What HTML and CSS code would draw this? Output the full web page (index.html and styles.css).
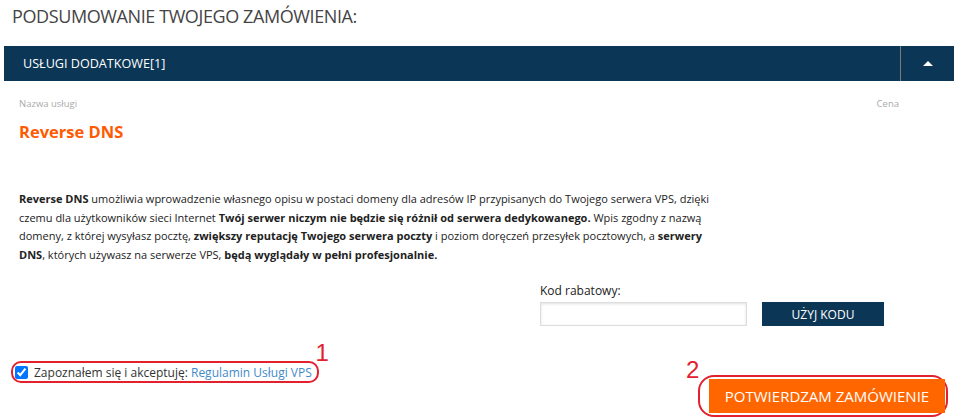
FILE: index.html
```html
<!DOCTYPE html>
<html>
<head>
    <meta charset="utf-8">
    <title>Podsumowanie zamówienia</title>
    <link rel="stylesheet" href="styles.css">
</head>
<body>
    <div class="summary">
        <h1 class="summary-title">PODSUMOWANIE TWOJEGO ZAMÓWIENIA:</h1>

        <div class="section-bar">
            <div class="bar-title">USŁUGI DODATKOWE[1]</div>
            <div class="bar-toggle"><span class="arrow-up"></span></div>
        </div>

        <div class="service-head">
            <span>Nazwa usługi</span>
            <span>Cena</span>
        </div>

        <div class="service">
            <h2 class="service-name">Reverse DNS</h2>
            <p class="service-desc"><b>Reverse DNS</b> umożliwia wprowadzenie własnego opisu w postaci domeny dla adresów IP przypisanych do Twojego serwera VPS, dzięki czemu dla użytkowników sieci Internet <b>Twój serwer niczym nie będzie się różnił od serwera dedykowanego.</b> Wpis zgodny z nazwą domeny, z której wysyłasz pocztę, <b>zwiększy reputację Twojego serwera poczty</b> i poziom doręczeń przesyłek pocztowych, a <b>serwery DNS</b>, których używasz na serwerze VPS, <b>będą wyglądały w pełni profesjonalnie.</b></p>
        </div>

        <div class="discount">
            <div class="discount-box">
                <label class="discount-label" for="code">Kod rabatowy:</label>
                <div class="discount-row">
                    <input class="discount-input" id="code" type="text">
                    <button class="btn-dark">UŻYJ KODU</button>
                </div>
            </div>
        </div>

        <div class="order-footer">
            <label class="terms marked">
                <input type="checkbox" checked>
                <span>Zapoznałem się i akceptuję: <a href="#">Regulamin Usługi VPS</a></span>
                <span class="mark-num mark-1">1</span>
            </label>

            <div class="confirm marked">
                <span class="mark-num mark-2">2</span>
                <button class="btn-orange">POTWIERDZAM ZAMÓWIENIE</button>
            </div>
        </div>
    </div>
</body>
</html>
```

FILE: styles.css
```css
* { box-sizing: border-box; }

body {
    margin: 0;
    background: #fff;
    color: #222;
    font-family: "Open Sans", Arial, sans-serif;
}

.summary {
    padding: 0 0 0 4px;
}

.summary-title {
    margin: 0;
    padding: 4px 8px 0;
    font-size: 18px;
    letter-spacing: -0.4px;
    font-weight: normal;
    color: #444;
    height: 46px;
}

.section-bar {
    display: flex;
    height: 35px;
    background: #0b3655;
    color: white;
}

.bar-title {
    flex: 1;
    padding-left: 19px;
    line-height: 35px;
    font-size: 12.6px;
}

.bar-toggle {
    width: 54px;
    border-left: 1px solid #7a7a7a;
    display: flex;
    align-items: center;
    justify-content: center;
}

.arrow-up {
    width: 0;
    height: 0;
    border-left: 5px solid transparent;
    border-right: 5px solid transparent;
    border-bottom: 5px solid white;
}

.service-head {
    display: flex;
    justify-content: space-between;
    padding: 16px 55px 0 15px;
    font-size: 9.5px;
    color: #aaa;
}

.service {
    padding: 0 15px;
}

.service-name {
    margin: 10px 0 0;
    font-size: 16.5px;
    color: #ff5a00;
}

.service-desc {
    margin: 47px 0 0;
    width: 700px;
    font-size: 11px;
    line-height: 18.5px;
    color: #222;
}

.discount {
    display: flex;
    justify-content: flex-end;
    padding-right: 70px;
    margin-top: 18px;
}

.discount-box {
    width: 344px;
}

.discount-label {
    display: block;
    font-size: 12px;
    margin-bottom: 3px;
}

.discount-row {
    display: flex;
    gap: 15px;
}

.discount-input {
    width: 207px;
    height: 24px;
    border: 1px solid #ddd;
    box-shadow: inset 0 1px 3px rgba(0,0,0,0.12);
}

.btn-dark {
    width: 122px;
    height: 24px;
    border: none;
    background: #0b3655;
    color: white;
    font-family: inherit;
    font-size: 12px;
}

.order-footer {
    display: flex;
    justify-content: space-between;
    align-items: flex-end;
    padding: 0 6px 2px 7px;
    margin-top: 35px;
}

.marked {
    position: relative;
    border: 2px solid #e3202e;
}

.terms {
    display: flex;
    align-items: center;
    gap: 6px;
    height: 22px;
    padding: 0 5px 0 2px;
    border-radius: 10px;
    font-size: 12px;
    color: #333;
    margin-bottom: 34px;
}

.terms input {
    margin: 0;
    width: 13px;
    height: 13px;
}

.terms a {
    color: #3f8bc9;
    text-decoration: none;
}

.confirm {
    padding: 2px 0 2px 9px;
    border-radius: 16px;
    width: 250px;
}

.btn-orange {
    width: 236px;
    height: 34px;
    border: none;
    background: #ff6600;
    color: white;
    font-family: inherit;
    font-size: 15px;
}

.mark-num {
    position: absolute;
    color: #e3202e;
    font-family: Arial, sans-serif;
    font-size: 24px;
    line-height: 1;
}

.mark-1 {
    right: -12px;
    top: -22px;
}

.mark-2 {
    left: -14px;
    top: -19px;
}
```
